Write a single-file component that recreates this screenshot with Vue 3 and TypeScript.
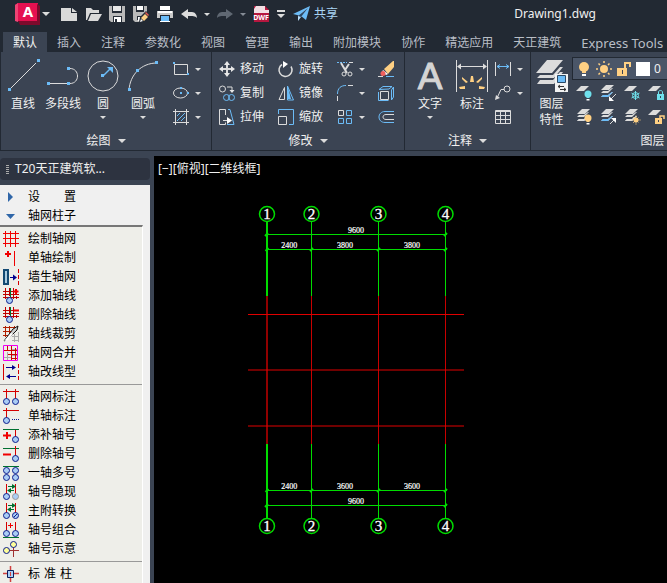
<script setup lang="ts">
interface Tool {
  icon: string
  label: string
}

interface PaletteItem extends Tool {
  gap?: 'wide' | 'narrow'
}

const blue = '#6cbcf7'
const gold = '#ffd083'
const cyan = '#6fe0ec'
const node = (x: number, y: number) => `<rect x="${x}" y="${y}" width="3" height="3" fill="${blue}" stroke="none"/>`
const sheet = (x: number, y: number, fill: string) =>
  `<path d="M${x} ${y + 5}l5-5h8l-5 5z" fill="${fill}" stroke="none"/>`
const stack = (last: string) =>
  sheet(1, 0, '#dcdcdc') +
  `<path d="M3 6h5l4-3h1l-5 5H1zM3 10h5l4-3h1l-5 5H1z" fill="#dcdcdc" stroke="none"/>` +
  `<path d="M3 10h5l4-3h1l-5 5H1z" fill="${last}" stroke="none"/>`
const bulb = (color: string) =>
  `<circle cx="12" cy="9" r="3.5" fill="${color}" stroke="none"/><path d="M10.500 11h3v2h-3z" fill="${color}" stroke="none"/><path d="M10.500 14h3v1.500h-3z" fill="#fff" stroke="none"/>`

const icons: Record<string, string> = {
  new: '<path d="M0 2h10v5h6v8H0z" fill="#d9d9d9"/><path d="M11 2l5 4h-5z" fill="#d9d9d9"/>',
  open: '<path d="M1 14V2h5l2 2h6v3H5l-3 7z" fill="#d9d9d9"/><path d="M6 8h11l-4 7H3z" fill="#d9d9d9"/>',
  save: '<path d="M0 0h16v16H2l-2-2z" fill="#b9b9b9"/><path d="M3 0h10v7H3zM4 10h9v6H4z" fill="#262d37"/><path d="M4 0h8v5H4z" fill="#e8e8e8"/><path d="M5 11h7v5H5z" fill="#fff"/><path d="M6 13h2v3H6z" fill="#262d37"/>',
  saveas: '<path d="M0 0h14v12H9l-2 4H2l-2-2z" fill="#b9b9b9"/><path d="M3 0h8v6H3zM4 10h5v4H4z" fill="#262d37"/><path d="M4 0h6v4H4zM5 11h3v4H5z" fill="#fff"/><path d="M6 16l1-5 6-6 4 4-6 6z" fill="#262d37"/><path d="M8 12l4-4 3 3-4 4z" fill="#ffd083"/><path d="M12 7l1-1 3 3-1 1z" fill="#e65b51"/><path d="M7 16l1-3 2 2z" fill="#fff"/>',
  plot: '<path d="M3 0h10v4H3z" fill="#fff"/><path d="M0 5h16v7h-3V9H3v3H0z" fill="#c9c9c9"/><path d="M1 5h14v2H1z" fill="#fff"/><path d="M4 10h8v5H4z" fill="#6cbcf7"/><path d="M3 15h10v1H3z" fill="#fff"/>',
  undo: '<path d="M0 8l7-5v3h4c3 0 5 3 5 6-2-2-4-2-9-2v3z" fill="#dcdcdc"/>',
  redo: '<path d="M16 8L9 3v3H5c-3 0-5 3-5 6 2-2 4-2 9-2v3z" fill="#606873"/>',
  share: '<path d="M0 8L17 0 13 14 8 10z" fill="#6cbcf7"/><path d="M5 10v5l3-4L15 2z" fill="#b9defb"/><path d="M5 10L15 2 8 11z" fill="#2a4663"/>',

  line: `<path d="M3 29L29 3"/>${node(1, 28)}${node(30, -1)}`,
  polyline: `<path d="M2 23.500h19M23 8.500c10 0 10 15 0 15"/>${node(0, 22)}${node(20, 22)}${node(20, 7)}`,
  circle: `<circle cx="16" cy="16" r="15"/><path d="M16 16l8-8" stroke="${blue}" stroke-width="1.500"/><path d="M20 7h6v6z" fill="${blue}" stroke="none"/>${node(14, 14)}`,
  arc: `<path d="M2 30C3 15 14 3 30 3"/>${node(1, 28)}${node(9, 9)}${node(28, 1)}`,
  rect: `<path d="M1.500 3.500h13v10h-13z"/>${node(0, 1)}${node(14, 12)}`.replace(/width="3" height="3"/g, 'width="2" height="2"'),
  ellipse: `<ellipse cx="7.500" cy="8" rx="7" ry="5"/><path d="M7 2h2v2H7zM7 7h2v2H7zM14 7h2v2h-2z" fill="${blue}" stroke="none"/>`,
  hatch: `<path d="M2.500 0v16M13.500 0v16M0 2.500h16M0 13.500h16"/><path d="M4 7l3-3M4 12l8-8M8 12l4-4" stroke="${blue}"/>`,
  move: '<path d="M8 2v12M2 8h12" stroke-width="2"/><path d="M8 0l3 4H5zM8 16l3-4H5zM0 8l4-3v6zM16 8l-4-3v6z" fill="#e8e8e8" stroke="none"/>',
  rotate: '<path d="M4 3.500a6.500 6.500 0 1 0 9 2" stroke-width="1.500"/><path d="M5 0l5 3-5 4z" fill="#fff" stroke="none"/>',
  copy: `<circle cx="3.500" cy="4" r="3"/><path d="M8 2h5v4"/><path d="M10.500 5h5L13 8z" fill="#e8e8e8" stroke="none"/><g stroke="${blue}"><circle cx="7.500" cy="12.500" r="3"/><circle cx="12.500" cy="12.500" r="3"/></g>`,
  mirror: `<path d="M1 14.500l5.500-12v12z"/><path d="M9.500 1v14h6z" stroke="${blue}"/><path d="M10 2v12h3z" fill="${blue}" stroke="none"/>`,
  stretch: `<path d="M6.500 6V.500h-6v15h6v-2M4 11.500h7"/><path d="M8 8l5 3.500L8 15z" fill="#fff" stroke="none"/><path d="M9 .500h2l4 15h-7" stroke="${blue}"/>`,
  scale: `<path d="M.500 7.500h8v8h-8z"/><path d="M.500 5V.500h15v15H11" stroke="${blue}"/>`,
  trim: `<path d="M0 1.500h10" stroke="${blue}" stroke-dasharray="2 1"/><path d="M12 1.500h4"/><path d="M4 2l6 10M12 3L8 9" stroke-width="2"/><circle cx="7" cy="13" r="2"/><circle cx="13" cy="13" r="2"/>`,
  fillet: `<path d="M.500 16v-5M11 .500h5"/><path d="M.500 9C.500 3 4 .500 9 .500" stroke="${blue}"/>`,
  array: `<path d="M1.500 1.500h5v5h-5z"/><path d="M9.500 1.500h5v5h-5zM1.500 9.500h5v5h-5zM9.500 9.500h5v5h-5z" stroke="${blue}"/>`,
  erase: `<path d="M6 8l9-8h1v6l-6 7z" fill="${gold}" stroke="none"/><path d="M5 9l5 4-2 1-4-3z" fill="#fff" stroke="none"/><circle cx="5" cy="12.500" r="2.500" fill="#f0605c" stroke="none"/><path d="M0 15.500h5"/><path d="M8 15.500h8" stroke="${blue}"/>`,
  explode: `<path d="M2.500 6.500h8v8h-8z"/><path d="M1 4.500L5 1.500h9L11 4zM13.500 5l2-3v10l-2 3zM.500 7v8.500h10" stroke="${blue}"/>`,
  offset: `<path d="M16 5.500H8C4 5.500 4 10.500 8 10.500h8"/><path d="M16 2.500H7c-8 0-8 11 0 11h9" stroke="${blue}"/>`,
  dimension: `<path d="M.500 0v32M31.500 0v32M2 6.500h28"/><path d="M1 6.500l4-3v6zM31 6.500l-4-3v6z" fill="#dcdcdc" stroke="none"/><path d="M15 16h2l1 6h-4zM6 17l6 5-2 1-4-4zM26 17l-6 5 2 1 4-4zM3 27l6-1v3H4zM29 27l-6-1v3h5z" fill="${gold}" stroke="none"/>`,
  linear: `<path d="M.500 1v14M15.500 1v14"/><path d="M2 5.500h12M5 3.500l-3 2 3 2M11 3.500l3 2-3 2" stroke="${blue}"/>`,
  leader: '<circle cx="12" cy="4" r="3"/><path d="M9 4.500H6L2 13"/><path d="M0 15l1-5 4 3z" fill="#dcdcdc" stroke="none"/>',
  table: '<path d="M.500 1.500h15v13H.500zM1 2.500h14M1 6.500h14M1 10.500h14M5.500 3v11M10.500 3v11"/>',
  layers: `<path d="M0 13L11 0h16L16 13zM1 18l3-3h13l7-8h3L18 18zM1 24l3-4h13l7-8h3L18 24z" fill="#dcdcdc" stroke="none"/><path d="M19 14h13v18H19z" fill="#f2f2f2" stroke="none"/><path d="M21.500 15.500h8v7h-8z" fill="${blue}" stroke="#2c4a66"/><path d="M22 26.500h6M24 29.500h6M24 25l-2 1.500 2 1.500M28 28l2 1.500-2 1.500" stroke="#333"/>`,
  bulb: `<circle cx="8" cy="6" r="5" fill="${gold}" stroke="none"/><path d="M6 10h4v2H6z" fill="${gold}" stroke="none"/><path d="M6 13h4v2H6z" fill="#fff" stroke="none"/>`,
  sun: `<circle cx="8" cy="8" r="4" fill="${gold}" stroke="none"/><path d="M8 0v2M8 14v2M0 8h2M14 8h2M2.500 2.500l1.500 1.500M12 12l1.500 1.500M13.500 2.500L12 4M4 12l-1.500 1.500" stroke="${gold}" stroke-width="1.500"/>`,
  unlock: `<path d="M1 7h10v8H1z" fill="${gold}" stroke="none"/><path d="M9 7V2h5v4" stroke="${gold}" stroke-width="2"/><path d="M6 9h1v4H6z" fill="#3b4453" stroke="none"/>`,
  layoff: sheet(0, 1, '#dcdcdc') + bulb(cyan),
  layiso: stack(blue) + '<path d="M16 9l-5 5"/><path d="M9 16v-5l5 5z" fill="#fff" stroke="none"/>',
  layfrz: sheet(0, 1, '#dcdcdc') + `<path d="M11.500 6v9M7.500 8l8 5M7.500 13l8-5" stroke="${cyan}"/><circle cx="11.500" cy="10.500" r="3" stroke="${cyan}"/>`,
  laylck: sheet(0, 1, '#dcdcdc') + `<path d="M9 9h7v6H9z" fill="${cyan}" stroke="none"/><path d="M10.500 9V7c0-2 4-2 4 0v2" stroke="${cyan}"/><path d="M12 11h1v2h-1z" fill="#3b4453" stroke="none"/>`,
  layon: stack('#dcdcdc') + bulb(gold),
  layuniso: stack(blue) + '<path d="M10 15l5-5"/><path d="M11 9h5v5z" fill="#fff" stroke="none"/>',
  laythw: stack('#dcdcdc') + `<circle cx="12" cy="11" r="2.500" fill="${gold}" stroke="none"/><path d="M12 6.500v9M7.500 11h9M9 8l6 6M9 14l6-6" stroke="${gold}" stroke-dasharray="1 1"/>`,
  layulk: sheet(0, 1, '#dcdcdc') + `<path d="M7 9h7v6H7z" fill="${gold}" stroke="none"/><path d="M12 9V7h4v3" stroke="${gold}" stroke-width="1.500"/><path d="M10 11h1v2h-1z" fill="#3b4453" stroke="none"/>`,
}

const red = '#d40000'
const green = '#007030'
const ball = (x: number, y: number, fill = '#aacdf5', stroke = '#0b1c8c') =>
  `<circle cx="${x}" cy="${y}" r="3" fill="${fill}" stroke="${stroke}"/>`
const miniGrid = '<path d="M2.500 0v11M6.500 0v8M10.500 0v11M13.500 8v3M0 3.500h11M0 6.500h16M0 9.500h16" stroke="#c00000"/><path d="M7.500 0v9" stroke="#007030"/>'
const pair = '<path d="M3.500 0v10M12.500 0v10" stroke="#d40000"/>'
const swap = '<path d="M5 2.500h6M5 6.500h6" stroke="#007030"/><path d="M9 0l4 2.500L9 5zM8 4v5L4 6.500z" fill="#007030" stroke="none"/>'

const paletteIcons: Record<string, string> = {
  closed: '<path d="M5 3l5 5-5 5z" fill="#2f66a8" stroke="none"/>',
  opened: '<path d="M3 6h9l-4.500 5z" fill="#2f66a8" stroke="none"/>',
  grid: '<path d="M2.500 0v16M7.500 0v16M12.500 0v16M0 2.500h16M0 7.500h16M0 12.500h16" stroke="#f00000"/>',
  single: '<path d="M5 1v6M2 4h6" stroke="#f00000" stroke-width="2"/><path d="M11.500 1v15" stroke="#f00000"/>',
  wall: '<path d="M1 1h4v14H1z" fill="#aaccdf" stroke="#134a72" stroke-width="2"/><path d="M7 8.500h4" stroke="#000090"/><path d="M10 5.500l4 3-4 3z" fill="#000090" stroke="none"/><path d="M15.500 0v16" stroke="#d40000" stroke-dasharray="4 2"/>',
  addline: miniGrid + ball(6.5, 12.5) + '<path d="M13 1v5M10.500 3.500h5" stroke="#f00000" stroke-width="2"/>',
  delline: miniGrid + ball(6.5, 12.5) + '<path d="M11 3.500h5" stroke="#f00000" stroke-width="2"/>',
  cutline: '<path d="M2.500 0v11M6.500 0v9M0 1.500h12M0 5.500h9M0 9.500h6M11.500 0v4" stroke="#b02000"/><path d="M11.500 8v8M15.500 6v10M9 10.500h7M9 14.500h7" stroke="#aaa"/><path d="M1 15l9-12 5-3-1 4-8 8z" fill="#ccc" stroke="#111"/><path d="M1 15l7-8 2 1-5 6z" fill="#fff" stroke="none"/>',
  merge: '<path d="M4.500 7v9M8 4.500h7M8 10.500h7M1 12.500h7" stroke="#aaa"/><path d="M4.500 1v5M8.500 1v14M12.500 3v12M1 5.500h13M5 9.500h9M8 13.500h6" stroke="#d00000"/><path d="M.500.500h14v15H.500z" stroke="#f000f0"/>',
  change: '<path d="M.500 0v16" stroke="#d40000"/><path d="M15.500 0v16" stroke="#d40000" stroke-dasharray="4 2"/><path d="M3 3.500h7M6 12.500h7" stroke="#000090"/><path d="M9 1l4 2.500L9 6zM7 10v5l-4-2.500z" fill="#000090" stroke="none"/>',
  dimgrid: `<path d="M0 2.500h16" stroke="${red}"/>` + pair + ball(3.5, 12.5) + ball(12.5, 12.5),
  dimone: `<path d="M0 2.500h16M3.500 0v10" stroke="${red}"/><path d="M9 11.500h7" stroke="#0b1c8c" stroke-dasharray="1 1"/>` + ball(3.5, 12.5),
  addno: `<path d="M0 2.500h16" stroke="${green}"/><path d="M12.500 3v7" stroke="${red}"/><path d="M4 5v7M0 8.500h8" stroke="#f00000" stroke-width="2"/>` + ball(12.5, 12.5),
  delno: `<path d="M0 2.500h16" stroke="${green}"/><path d="M12.500 0v10" stroke="${red}"/><path d="M0 8.500h8" stroke="#f00000" stroke-width="2"/>` + ball(12.5, 12.5),
  multi: `<path d="M0 1.500h16" stroke="${green}"/>` + ball(3.5, 5.5) + ball(12.5, 5.5) + ball(3.5, 12.5) + ball(12.5, 12.5),
  hide: pair + swap + ball(3.5, 12.5) + ball(12.5, 12.5, '#aacdf5', '#999'),
  swap: pair + swap + ball(3.5, 12.5) + ball(12.5, 12.5) + '<path d="M11 14l3-3" stroke="#0b1c8c"/>',
  group: pair + '<path d="M7.500 1v5M5 3.500h5" stroke="#f00000"/><path d="M0 15.500h16" stroke="#007030"/>' + ball(3.5, 11.5) + ball(12.5, 11.5),
  hint: '<path d="M10.500 5v11M6 9.500h10" stroke="#a03030"/>' + ball(10.5, 3.5, '#ffff99') + ball(3.5, 9.5, '#ffff99'),
  column: '<path d="M7.500 0v16M0 7.500h16" stroke="#d04040" stroke-width="1.500"/><path d="M4.500 4.500h6v7h-6z" fill="#aacdf5" stroke="#0b1c5c"/><path d="M7.500 6v4" stroke="#d04040"/>',
}

const quickTools: Tool[] = [
  { icon: 'new', label: '新建' },
  { icon: 'open', label: '打开' },
  { icon: 'save', label: '保存' },
  { icon: 'saveas', label: '另存为' },
  { icon: 'plot', label: '打印' },
]

const tabs = ['默认', '插入', '注释', '参数化', '视图', '管理', '输出', '附加模块', '协作', '精选应用', '天正建筑', 'Express Tools']

const drawTools: (Tool & { menu: boolean })[] = [
  { icon: 'line', label: '直线', menu: false },
  { icon: 'polyline', label: '多段线', menu: false },
  { icon: 'circle', label: '圆', menu: true },
  { icon: 'arc', label: '圆弧', menu: true },
]
const drawSmall = ['rect', 'ellipse', 'hatch']
const modifyRows: { tools: Tool[]; menu: string; plain: string }[] = [
  { tools: [{ icon: 'move', label: '移动' }, { icon: 'rotate', label: '旋转' }], menu: 'trim', plain: 'erase' },
  { tools: [{ icon: 'copy', label: '复制' }, { icon: 'mirror', label: '镜像' }], menu: 'fillet', plain: 'explode' },
  { tools: [{ icon: 'stretch', label: '拉伸' }, { icon: 'scale', label: '缩放' }], menu: 'array', plain: 'offset' },
]
const annotateSmall = ['linear', 'leader', 'table']
const layerTools = ['layoff', 'layiso', 'layfrz', 'laylck', 'layon', 'layuniso', 'laythw', 'layulk']

const paletteTop: PaletteItem[] = [
  { icon: 'closed', label: '设置', gap: 'wide' },
  { icon: 'opened', label: '轴网柱子' },
]
const paletteGroups: PaletteItem[][] = [
  [
    { icon: 'grid', label: '绘制轴网' },
    { icon: 'single', label: '单轴绘制' },
    { icon: 'wall', label: '墙生轴网' },
    { icon: 'addline', label: '添加轴线' },
    { icon: 'delline', label: '删除轴线' },
    { icon: 'cutline', label: '轴线裁剪' },
    { icon: 'merge', label: '轴网合并' },
    { icon: 'change', label: '轴改线型' },
  ],
  [
    { icon: 'dimgrid', label: '轴网标注' },
    { icon: 'dimone', label: '单轴标注' },
    { icon: 'addno', label: '添补轴号' },
    { icon: 'delno', label: '删除轴号' },
    { icon: 'multi', label: '一轴多号' },
    { icon: 'hide', label: '轴号隐现' },
    { icon: 'swap', label: '主附转换' },
    { icon: 'group', label: '轴号组合' },
    { icon: 'hint', label: '轴号示意' },
  ],
  [{ icon: 'column', label: '标准柱', gap: 'narrow' }],
]

const axes = [
  { x: 113, no: '1' },
  { x: 157.5, no: '2' },
  { x: 224.5, no: '3' },
  { x: 291.5, no: '4' },
]
const beams = [158.5, 214, 270]
const ends = [
  { bubble: 58, from: 66, to: 140, chain: 93.5, total: 78.5, spans: ['2400', '3800', '3800'] },
  { bubble: 370, from: 362, to: 288, chain: 334.5, total: 349.5, spans: ['2400', '3600', '3600'] },
]
const middle = (i: number) => (axes[i].x + axes[i + 1].x) / 2
</script>

<template>
  <div class="app">
    <header class="titlebar">
      <button class="logo" aria-label="应用程序菜单">
        <svg width="25" height="23" viewBox="0 0 25 23">
          <path d="M3 0h20v18H0V2z" fill="#e51050" />
          <path d="M0 2l3-2v19l-3-1z" fill="#ee4474" />
          <path d="M3 18h19V1l3 2v19H5z" fill="#7d0a2c" />
          <text x="13" y="14" text-anchor="middle" font-size="15" font-weight="700" fill="#fff">A</text>
        </svg>
      </button>
      <button class="menu first-menu" aria-label="菜单"><i class="caret"></i></button>
      <button v-for="t in quickTools" :key="t.icon" class="quick" :aria-label="t.label">
        <svg width="18" height="16" viewBox="0 0 18 16" v-html="icons[t.icon]"></svg>
      </button>
      <button class="quick history" aria-label="放弃"><svg width="16" height="16" v-html="icons.undo"></svg></button>
      <button class="menu" aria-label="放弃列表"><i class="caret tiny"></i></button>
      <button class="quick history" aria-label="重做"><svg width="16" height="16" v-html="icons.redo"></svg></button>
      <button class="menu" aria-label="重做列表"><i class="caret tiny dim"></i></button>
      <button class="quick history" aria-label="DWF">
        <svg width="17" height="16" viewBox="0 0 17 16">
          <path d="M1 0h11l4 4v12H1z" fill="#b5173f" />
          <path d="M3 0h9v4h4v3H1V3z" fill="#f3dfe4" />
          <text x="8" y="14" text-anchor="middle" font-size="7" font-weight="700" fill="#fff">DWF</text>
        </svg>
      </button>
      <button class="menu more" aria-label="自定义快速访问工具栏"><i class="bar"></i><i class="caret"></i></button>
      <button class="share">
        <svg width="17" height="16" v-html="icons.share"></svg>
        <span>共享</span>
      </button>
      <h1>Drawing1.dwg</h1>
    </header>

    <nav class="tabs">
      <button v-for="(t, i) in tabs" :key="t" :class="{ active: i === 0, latin: t === 'Express Tools' }">{{ t }}</button>
    </nav>

    <div class="ribbon">
      <section class="panel draw">
        <div class="tools">
          <button v-for="t in drawTools" :key="t.icon" class="big">
            <svg class="ink" width="32" height="32" v-html="icons[t.icon]"></svg>
            <span>{{ t.label }}</span>
            <i v-if="t.menu" class="caret tiny"></i>
          </button>
          <div class="rows">
            <button v-for="n in drawSmall" :key="n" class="split" :aria-label="n">
              <svg class="ink" width="16" height="16" v-html="icons[n]"></svg>
              <i class="caret tiny"></i>
            </button>
          </div>
        </div>
        <h2>绘图<i class="caret"></i></h2>
      </section>

      <section class="panel modify">
        <div class="tools rows">
          <div v-for="r in modifyRows" :key="r.menu" class="row">
            <button v-for="t in r.tools" :key="t.icon" class="labelled">
              <svg class="ink" width="16" height="16" v-html="icons[t.icon]"></svg>
              <span>{{ t.label }}</span>
            </button>
            <button class="split" :aria-label="r.menu">
              <svg class="ink" width="16" height="16" v-html="icons[r.menu]"></svg>
              <i class="caret tiny"></i>
            </button>
            <button class="only" :aria-label="r.plain">
              <svg class="ink" width="16" height="16" v-html="icons[r.plain]"></svg>
            </button>
          </div>
        </div>
        <h2>修改<i class="caret"></i></h2>
      </section>

      <section class="panel annotate">
        <div class="tools">
          <button class="big">
            <svg width="32" height="32">
              <text class="letter" x="16" y="29">A</text>
            </svg>
            <span>文字</span>
            <i class="caret tiny"></i>
          </button>
          <button class="big">
            <svg class="ink" width="32" height="32" v-html="icons.dimension"></svg>
            <span>标注</span>
          </button>
          <div class="rows">
            <button v-for="n in annotateSmall" :key="n" class="split" :aria-label="n">
              <svg class="ink" width="16" height="16" v-html="icons[n]"></svg>
              <i v-if="n !== 'table'" class="caret tiny"></i>
            </button>
          </div>
        </div>
        <h2>注释<i class="caret"></i></h2>
      </section>

      <section class="panel layer">
        <div class="tools">
          <button class="big">
            <svg class="ink" width="32" height="32" v-html="icons.layers"></svg>
            <span>图层<br />特性</span>
          </button>
          <div class="layer-side">
            <button class="layer-pick" aria-label="图层 0">
              <svg class="ink" width="16" height="16" v-html="icons.bulb"></svg>
              <svg class="ink" width="16" height="16" v-html="icons.sun"></svg>
              <svg class="ink" width="16" height="16" v-html="icons.unlock"></svg>
              <i class="swatch"></i>
              <span>0</span>
            </button>
            <div class="layer-grid">
              <button v-for="n in layerTools" :key="n" :aria-label="n">
                <svg class="ink" width="17" height="16" v-html="icons[n]"></svg>
              </button>
            </div>
          </div>
        </div>
        <h2>图层</h2>
      </section>
    </div>

    <main class="work">
      <aside class="palette">
        <div class="palette-head"><i class="grip"></i>T20天正建筑软...</div>
        <div class="palette-body">
          <button v-for="p in paletteTop" :key="p.icon" class="item">
            <svg class="thin" width="16" height="16" v-html="paletteIcons[p.icon]"></svg>
            <span v-if="p.gap" :class="['spread', p.gap]"><span v-for="c in p.label" :key="c">{{ c }}</span></span>
            <span v-else>{{ p.label }}</span>
          </button>
          <div class="tree">
            <div v-for="(g, i) in paletteGroups" :key="i" class="group">
              <button v-for="p in g" :key="p.icon" class="item">
                <svg class="thin" width="16" height="16" v-html="paletteIcons[p.icon]"></svg>
                <span v-if="p.gap" :class="['spread', p.gap]"><span v-for="c in p.label" :key="c">{{ c }}</span></span>
                <span v-else>{{ p.label }}</span>
              </button>
            </div>
          </div>
        </div>
      </aside>

      <section class="canvas">
        <p>[−][俯视][二维线框]</p>
        <svg class="drawing" width="100%" height="100%">
          <g fill="none">
            <path v-for="a in axes" :key="a.no" :d="`M${a.x} 140V288`" :stroke="a.no === '1' ? '#900000' : '#c80000'" :stroke-width="a.no === '1' ? 2 : 1" />
            <path v-for="y in beams" :key="y" :d="`M94 ${y}H310`" stroke="#e00000" />
          </g>
          <g v-for="e in ends" :key="e.bubble">
            <g fill="none" stroke="#00dc00">
              <path v-for="a in axes" :key="a.no" :d="`M${a.x} ${e.from}V${e.to}`" :stroke-width="a.no === '1' ? 2 : 1" />
              <path :d="`M112 ${e.chain}H293M112 ${e.total}H293`" />
              <path v-for="a in axes" :key="a.x" :d="`M${a.x - 1.5} ${e.chain + 1.5}l3-3`" stroke-width="2" />
              <path :d="`M111 ${e.total + 1.5}l3-3M290 ${e.total + 1.5}l3-3`" stroke-width="2" />
              <circle v-for="a in axes" :key="a.no" :cx="a.x" :cy="e.bubble" r="7.5" stroke-width="1.5" />
            </g>
            <text v-for="a in axes" :key="a.no" class="axis-no" :x="a.x" :y="e.bubble + 5">{{ a.no }}</text>
            <text v-for="(s, i) in e.spans" :key="i" class="dim-text" :x="middle(i)" :y="e.chain - 2">{{ s }}</text>
            <text class="dim-text" x="202" :y="e.total - 2">9600</text>
          </g>
        </svg>
      </section>
    </main>
  </div>
</template>

<style>
body {
  background: #3b4453;
}
</style>

<style scoped>
.app {
  display: flex;
  flex-direction: column;
  height: 100vh;
  overflow: hidden;
  background: #3b4453;
  color: #f0f0f0;
  font: 12px/16px "Noto Sans", "Noto Sans CJK SC", sans-serif;
}

button {
  display: flex;
  align-items: center;
  margin: 0;
  padding: 0;
  border: 0;
  background: none;
  color: inherit;
  font: inherit;
  white-space: nowrap;
}

svg {
  display: block;
  flex: none;
  overflow: visible;
}

.ink {
  fill: none;
  stroke: #dcdcdc;
}

.thin {
  fill: none;
}

.caret {
  flex: none;
  border: 4px solid transparent;
  border-top-color: #dcdcdc;
  border-bottom: 0;
}

.caret.tiny {
  border-width: 3px 3px 0;
}

.caret.dim {
  border-top-color: #858c96;
}

.titlebar {
  display: flex;
  flex: none;
  align-items: center;
  height: 28px;
  padding-left: 15px;
  background: #222933;
}

.menu {
  justify-content: center;
  width: 20px;
  height: 16px;
}

.first-menu {
  width: 12px;
  margin-right: 9px;
}

.quick {
  width: 24px;
}

.history {
  width: 16px;
}

.more {
  flex-direction: column;
  gap: 2px;
  width: 24px;
}

.bar {
  width: 8px;
  height: 2px;
  background: #dcdcdc;
}

.share {
  gap: 4px;
  color: #a9d4f5;
}

h1 {
  flex: 1;
  margin: 0 71px 0 0;
  font: inherit;
  text-align: right;
}

.tabs {
  display: flex;
  flex: none;
  align-items: flex-end;
  height: 24px;
  padding-left: 3px;
  background: #222933;
  color: #b9bec6;
}

.tabs button {
  height: 20px;
  padding: 2px 10px 0;
}

.tabs .latin {
  font-size: 13px;
}

.tabs .active {
  background: #3b4453;
  color: #f0f0f0;
}

.ribbon {
  display: flex;
  flex: none;
  height: 104px;
  overflow: hidden;
}

.panel {
  display: flex;
  flex: none;
  flex-direction: column;
  height: 99px;
  box-sizing: border-box;
  border-bottom: 1px solid #222933;
  border-left: 1px solid #222933;
}

.draw {
  width: 211px;
}

.modify {
  width: 193px;
}

.annotate {
  width: 126px;
}

.layer {
  flex: 1;
}

.tools {
  display: flex;
  flex: 1;
  padding-top: 5px;
}

.big {
  flex-direction: column;
  align-self: flex-start;
  gap: 4px;
  width: 42px;
  padding-top: 3px;
  text-align: center;
}

.rows {
  display: flex;
  flex-direction: column;
}

.row,
.split {
  display: flex;
  align-items: center;
  height: 24px;
}

.split {
  gap: 6px;
}

.draw .tools {
  padding-left: 2px;
}

.draw .big {
  width: 40px;
}

.draw .rows {
  margin-left: 10px;
}

.modify .rows {
  padding-left: 7px;
}

.labelled {
  gap: 5px;
  width: 59px;
}

.only {
  margin-left: 13px;
}

h2 {
  display: flex;
  flex: none;
  align-items: center;
  justify-content: center;
  gap: 7px;
  box-sizing: border-box;
  margin: 0;
  height: 21px;
  padding-top: 2px;
  font: inherit;
}

.annotate .tools {
  padding-left: 4px;
}

.annotate .rows {
  margin-left: 2px;
}

.letter {
  fill: #d4d4d4;
  stroke: #d4d4d4;
  font: 37px "Liberation Sans", sans-serif;
  text-anchor: middle;
}

.layer .big {
  width: 41px;
}

.layer-side {
  flex: 1;
}

.layer-pick {
  gap: 4px;
  box-sizing: border-box;
  width: 100%;
  height: 23px;
  padding-left: 3px;
  border: 1px solid #222933;
  border-right: 0;
  background: #4b5668;
}

.swatch {
  width: 14px;
  height: 14px;
  background: #fff;
}

.layer-grid {
  display: grid;
  grid-template-columns: repeat(4, 24px);
  padding: 1px 0 0 4px;
}

.layer-grid button {
  height: 24px;
}

.layer h2 {
  padding-left: 102px;
}

.work {
  display: flex;
  flex: 1;
  gap: 4px;
  min-height: 0;
}

.palette {
  display: flex;
  flex: none;
  flex-direction: column;
  width: 150px;
}

.palette-head {
  display: flex;
  flex: none;
  align-items: center;
  gap: 6px;
  height: 22px;
  margin: 2px 0 5px;
  padding-left: 6px;
  border-radius: 4px;
  background: #2d3340;
}

.grip {
  width: 3px;
  height: 9px;
  background: repeating-linear-gradient(#aaa 0 1px, transparent 1px 2px);
}

.palette-body {
  flex: 1;
  padding-top: 2px;
  overflow: hidden;
  background: #f0f0f0;
  color: #000;
}

.item {
  gap: 9px;
  width: 100%;
  height: 19px;
  padding-left: 3px;
}

.spread {
  display: flex;
}

.wide {
  gap: 24px;
}

.narrow {
  gap: 4px;
}

.tree {
  margin-right: 7px;
  border-top: 2px solid #777;
  border-right: 1px solid #fff;
  background: #eeeee9;
}

.group {
  padding: 2px 0 3px;
}

.group + .group {
  border-top: 1px solid #999;
}

.canvas {
  position: relative;
  flex: 1;
  background: #000;
}

.canvas p {
  margin: 5px 4px;
}

.drawing {
  position: absolute;
  inset: 0;
}

.axis-no {
  fill: #fff;
  stroke: #fff;
  stroke-width: 0.3px;
  font: 15px "Liberation Serif", serif;
  text-anchor: middle;
}

.dim-text {
  fill: #fff;
  stroke: #fff;
  stroke-width: 0.2px;
  font: 8px "Liberation Serif", serif;
  text-anchor: middle;
}
</style>
